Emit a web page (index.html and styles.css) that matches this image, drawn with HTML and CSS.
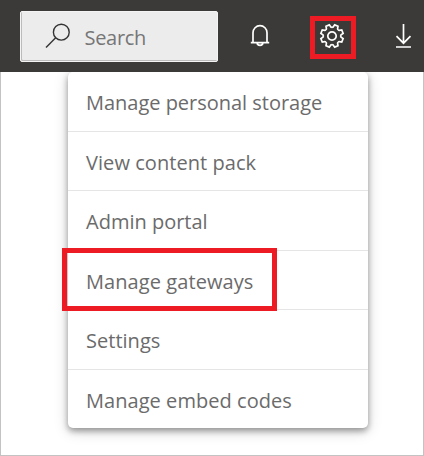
FILE: index.html
```html
<!DOCTYPE html>
<html lang="en">
<head>
<meta charset="utf-8">
<title>Settings menu</title>
<link rel="stylesheet" href="styles.css">
</head>
<body>
<div class="page">
  <main class="content">
    <nav class="menu">
      <a class="item"><span class="t1">Manage personal storage</span></a>
      <a class="item"><span class="t2">View content pack</span></a>
      <a class="item"><span class="t3">Admin portal</span></a>
      <a class="item marked"><span class="t4">Manage gateways</span></a>
      <a class="item"><span class="t5">Settings</span></a>
      <a class="item"><span class="t6">Manage embed codes</span></a>
    </nav>
  </main>
  <header class="bar">
    <div class="search">
      <svg class="lens" width="26" height="26" viewBox="0 0 26 26"><circle cx="16.3" cy="9.2" r="7.9"/><path d="M10.7 14.8L1 24.5"/></svg>
      <span>Search</span>
    </div>
    <svg class="icon bell" width="20" height="24" viewBox="0 0 20 24"><path d="M3 18.7V8.7a7 7 0 0 1 14 0v10M.8 18.7h18.4M7.2 19a2.8 2.3 0 0 0 5.6 0"/></svg>
    <div class="gear-box">
      <svg class="icon" width="26" height="26" viewBox="-13 -13 26 26">
        <defs><path id="tooth" d="M-3.3-7.9L-2.4-8.8L-1.8-11.3H1.8L2.4-8.8L3.3-7.9"/></defs>
        <use href="#tooth" transform="rotate(22.5)"/><use href="#tooth" transform="rotate(67.5)"/>
        <use href="#tooth" transform="rotate(112.5)"/><use href="#tooth" transform="rotate(157.5)"/>
        <use href="#tooth" transform="rotate(202.5)"/><use href="#tooth" transform="rotate(247.5)"/>
        <use href="#tooth" transform="rotate(292.5)"/><use href="#tooth" transform="rotate(337.5)"/>
        <circle r="4.2"/>
      </svg>
    </div>
    <svg class="icon download" width="18" height="26" viewBox="0 0 18 26"><path d="M9.5 1v19M2.5 13.2l7 7 7-7M2 24h15"/></svg>
  </header>
</div>
</body>
</html>
```
FILE: styles.css
```css
*, *::before { box-sizing: border-box; }
body { margin: 0; font-family: "Open Sans", "Noto Sans", sans-serif; font-size: 20px; color: #6b6b6b; }
.page { display: flex; flex-direction: column-reverse; width: 424px; height: 456px; overflow: hidden; background: #fff; }
.bar { position: relative; z-index: 1; flex: none; display: flex; align-items: flex-start; height: 72px; padding: 11px 0 0 20px; background: #3b3a38; }
.search { display: flex; align-items: center; width: 198px; height: 51px; padding: 0 0 1px 24px; background: #ececec; border: 1px solid #f4f4f4; border-radius: 2px; box-shadow: inset 1px -1px #bbb; color: #767676; }
.search span { margin: 2px 0 0 13.5px; letter-spacing: -.3px; }
.lens { fill: none; stroke: #333; stroke-width: 1.4; }
.icon { display: block; flex: none; fill: none; stroke: #fff; stroke-width: 1.7; }
.bell { margin: 13px 0 0 32px; }
.gear-box { display: flex; flex: none; align-items: center; justify-content: center; width: 46px; height: 43px; margin: 5px 0 0 40px; padding: 0 2px 3px 0; border: 5px solid #ed1c24; }
.download { margin: 12px 0 0 38px; }
.content { flex: 1; border: 1px solid #c3c3c3; border-top: 0; padding-left: 67px; }
.menu { width: 300px; height: 356px; background: #fff; border-radius: 5px; box-shadow: 0 3px 6px rgba(0,0,0,.36), 0 3px 15px rgba(0,0,0,.16); }
.item { position: relative; display: flex; align-items: center; height: 59.5px; padding: 3px 0 0 18px; border-bottom: 1px solid #e5e5e5; white-space: nowrap; }
.item:last-child { border-bottom: 0; }
.marked::before { content: ""; position: absolute; left: -6px; top: -3px; width: 215px; height: 63px; border: 5px solid #ed1c24; }
.t1 { letter-spacing: -.02px; }
.t2 { letter-spacing: .06px; }
.t3 { letter-spacing: 0; }
.t4 { letter-spacing: .08px; }
.t5 { letter-spacing: .02px; }
.t6 { letter-spacing: .05px; }
```
